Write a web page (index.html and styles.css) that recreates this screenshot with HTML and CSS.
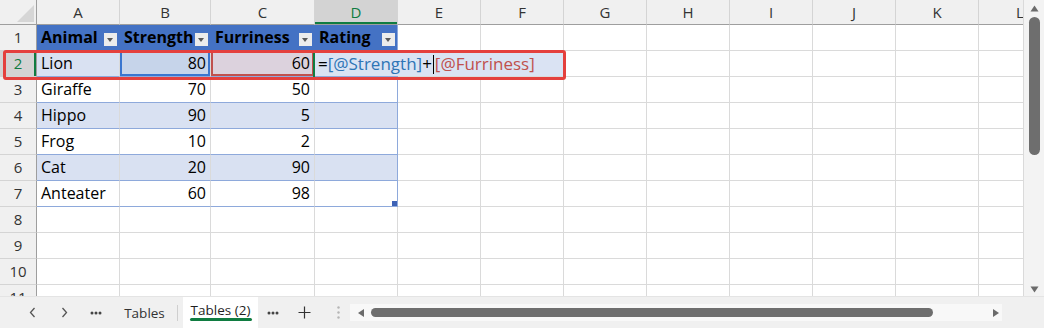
FILE: index.html
```html
<!DOCTYPE html>
<html lang="en">
  <head>
    <meta charset="UTF-8" />
    <title>Tables (2)</title>
    <link rel="stylesheet" href="styles.css">
  </head>
  <body>
    <div class="app">
      <div class="main">
        <div class="sheet">
          <!-- column headers -->
          <div class="corner"></div>
          <div class="col-head">A</div>
          <div class="col-head">B</div>
          <div class="col-head">C</div>
          <div class="col-head sel-col">D</div>
          <div class="col-head">E</div>
          <div class="col-head">F</div>
          <div class="col-head">G</div>
          <div class="col-head">H</div>
          <div class="col-head">I</div>
          <div class="col-head">J</div>
          <div class="col-head">K</div>
          <div class="col-head">L</div>

          <!-- row 1: table header -->
          <div class="row-head">1</div>
          <div class="cell head-cell">Animal<span class="filter"></span></div>
          <div class="cell head-cell">Strength<span class="filter"></span></div>
          <div class="cell head-cell">Furriness<span class="filter"></span></div>
          <div class="cell head-cell edge">Rating<span class="filter"></span></div>
          <div class="cell"></div><div class="cell"></div><div class="cell"></div><div class="cell"></div>
          <div class="cell"></div><div class="cell"></div><div class="cell"></div><div class="cell"></div>

          <!-- row 2: editing the formula -->
          <div class="row-head sel-row">2</div>
          <div class="cell tbl band">Lion</div>
          <div class="cell tbl band num ref-b">80</div>
          <div class="cell tbl band num ref-c">60</div>
          <div class="cell tbl band edge active">
            <div class="editor">=<span class="ref-s">[@Strength]</span>+<span class="caret"></span><span class="ref-f">[@Furriness]</span></div>
          </div>
          <div class="cell"></div><div class="cell"></div><div class="cell"></div><div class="cell"></div>
          <div class="cell"></div><div class="cell"></div><div class="cell"></div><div class="cell"></div>

          <div class="row-head">3</div>
          <div class="cell tbl">Giraffe</div>
          <div class="cell tbl num">70</div>
          <div class="cell tbl num">50</div>
          <div class="cell tbl edge"></div>
          <div class="cell"></div><div class="cell"></div><div class="cell"></div><div class="cell"></div>
          <div class="cell"></div><div class="cell"></div><div class="cell"></div><div class="cell"></div>

          <div class="row-head">4</div>
          <div class="cell tbl band">Hippo</div>
          <div class="cell tbl band num">90</div>
          <div class="cell tbl band num">5</div>
          <div class="cell tbl band edge"></div>
          <div class="cell"></div><div class="cell"></div><div class="cell"></div><div class="cell"></div>
          <div class="cell"></div><div class="cell"></div><div class="cell"></div><div class="cell"></div>

          <div class="row-head">5</div>
          <div class="cell tbl">Frog</div>
          <div class="cell tbl num">10</div>
          <div class="cell tbl num">2</div>
          <div class="cell tbl edge"></div>
          <div class="cell"></div><div class="cell"></div><div class="cell"></div><div class="cell"></div>
          <div class="cell"></div><div class="cell"></div><div class="cell"></div><div class="cell"></div>

          <div class="row-head">6</div>
          <div class="cell tbl band">Cat</div>
          <div class="cell tbl band num">20</div>
          <div class="cell tbl band num">90</div>
          <div class="cell tbl band edge"></div>
          <div class="cell"></div><div class="cell"></div><div class="cell"></div><div class="cell"></div>
          <div class="cell"></div><div class="cell"></div><div class="cell"></div><div class="cell"></div>

          <div class="row-head">7</div>
          <div class="cell tbl">Anteater</div>
          <div class="cell tbl num">60</div>
          <div class="cell tbl num">98</div>
          <div class="cell tbl edge corner-cell"><span class="handle"></span></div>
          <div class="cell"></div><div class="cell"></div><div class="cell"></div><div class="cell"></div>
          <div class="cell"></div><div class="cell"></div><div class="cell"></div><div class="cell"></div>

          <div class="row-head">8</div>
          <div class="cell"></div><div class="cell"></div><div class="cell"></div><div class="cell"></div>
          <div class="cell"></div><div class="cell"></div><div class="cell"></div><div class="cell"></div>
          <div class="cell"></div><div class="cell"></div><div class="cell"></div><div class="cell"></div>

          <div class="row-head">9</div>
          <div class="cell"></div><div class="cell"></div><div class="cell"></div><div class="cell"></div>
          <div class="cell"></div><div class="cell"></div><div class="cell"></div><div class="cell"></div>
          <div class="cell"></div><div class="cell"></div><div class="cell"></div><div class="cell"></div>

          <div class="row-head">10</div>
          <div class="cell"></div><div class="cell"></div><div class="cell"></div><div class="cell"></div>
          <div class="cell"></div><div class="cell"></div><div class="cell"></div><div class="cell"></div>
          <div class="cell"></div><div class="cell"></div><div class="cell"></div><div class="cell"></div>

          <div class="row-head">11</div>
          <div class="cell"></div><div class="cell"></div><div class="cell"></div><div class="cell"></div>
          <div class="cell"></div><div class="cell"></div><div class="cell"></div><div class="cell"></div>
          <div class="cell"></div><div class="cell"></div><div class="cell"></div><div class="cell"></div>

          <!-- red highlight drawn over row 2 -->
          <div class="callout"></div>
        </div>

        <div class="vscroll">
          <svg width="9" height="7" viewBox="0 0 9 7"><path d="M4.5 0.5 8.5 6.5 0.5 6.5Z" fill="#6b6b6b"/></svg>
          <div class="vthumb"></div>
          <svg class="down" width="9" height="7" viewBox="0 0 9 7"><path d="M0.5 0.5 8.5 0.5 4.5 6.5Z" fill="#6b6b6b"/></svg>
        </div>
      </div>

      <div class="tabbar">
        <div class="btn">
          <svg width="7" height="11" viewBox="0 0 7 11"><path d="M5.5 1 1.5 5.5 5.5 10" fill="none" stroke="#555" stroke-width="1.3"/></svg>
        </div>
        <div class="btn">
          <svg width="7" height="11" viewBox="0 0 7 11"><path d="M1.5 1 5.5 5.5 1.5 10" fill="none" stroke="#555" stroke-width="1.3"/></svg>
        </div>
        <div class="btn">
          <svg width="12" height="4" viewBox="0 0 12 4"><circle cx="2" cy="2" r="1.5" fill="#444"/><circle cx="6" cy="2" r="1.5" fill="#444"/><circle cx="10" cy="2" r="1.5" fill="#444"/></svg>
        </div>
        <div class="tab">Tables</div>
        <div class="tab-sep"></div>
        <div class="tab active-tab">Tables (2)</div>
        <div class="btn small">
          <svg width="12" height="4" viewBox="0 0 12 4"><circle cx="2" cy="2" r="1.5" fill="#444"/><circle cx="6" cy="2" r="1.5" fill="#444"/><circle cx="10" cy="2" r="1.5" fill="#444"/></svg>
        </div>
        <div class="btn">
          <svg width="13" height="13" viewBox="0 0 13 13"><path d="M6.5 0.5V12.5M0.5 6.5H12.5" stroke="#333" stroke-width="1.2"/></svg>
        </div>
        <div class="btn grip">
          <svg width="3" height="13" viewBox="0 0 3 13"><circle cx="1.5" cy="1.5" r="1.2" fill="#b5b5b5"/><circle cx="1.5" cy="6.5" r="1.2" fill="#b5b5b5"/><circle cx="1.5" cy="11.5" r="1.2" fill="#b5b5b5"/></svg>
        </div>
        <div class="hscroll">
          <svg width="6" height="8" viewBox="0 0 6 8"><path d="M6 0 6 8 0 4Z" fill="#6b6b6b"/></svg>
          <div class="hthumb"></div>
          <svg class="right" width="6" height="8" viewBox="0 0 6 8"><path d="M0 0 6 4 0 8Z" fill="#6b6b6b"/></svg>
        </div>
      </div>
    </div>
  </body>
</html>
```

FILE: styles.css
```css
* {
  box-sizing: border-box;
}
body {
  margin: 0;
  background: #fff;
  font-family: "Open Sans", "Liberation Sans", sans-serif;
}
.app {
  width: 1044px;
  height: 328px;
  display: flex;
  flex-direction: column;
  overflow: hidden;
}
.main {
  display: flex;
  height: 296px;
}
.sheet {
  position: relative;
  width: 1023px;
  height: 296px;
  overflow: hidden;
  display: grid;
  grid-template-columns: 37px 83px 91px 104px repeat(9, 83px);
  grid-template-rows: 25px repeat(11, 26px);
  align-content: start;
}

/* headers */
.corner {
  position: relative;
  background: #f0f0f0;
  border-right: 1px solid #9e9e9e;
  border-bottom: 1px solid #9e9e9e;
}
.corner::after {
  content: "";
  position: absolute;
  right: 2px;
  bottom: 2px;
  border-left: 17px solid transparent;
  border-bottom: 17px solid #d6d6d6;
}
.col-head {
  background: #f0f0f0;
  border-right: 1px solid #d4d4d4;
  border-bottom: 1px solid #9e9e9e;
  text-align: center;
  font-size: 15px;
  line-height: 24px;
  color: #333;
}
.row-head {
  background: #f0f0f0;
  border-right: 1px solid #9e9e9e;
  border-bottom: 1px solid #d4d4d4;
  text-align: center;
  font-size: 15px;
  line-height: 25px;
  color: #333;
}
.sel-col {
  background: #d3d3d3;
  color: #107c41;
  box-shadow: inset 0 -2px #107c41;
}
.sel-row {
  background: #d3d3d3;
  color: #107c41;
  box-shadow: inset -2px 0 #107c41;
}

/* cells */
.cell {
  border-right: 1px solid #dadada;
  border-bottom: 1px solid #dadada;
  padding: 0 4px;
  font-size: 16px;
  line-height: 25px;
  white-space: nowrap;
  overflow: hidden;
  color: #000;
}
.num {
  text-align: right;
}
.tbl {
  border-bottom-color: #8ea9db;
}
.edge {
  border-right-color: #8ea9db;
}
.band {
  background: #d9e1f2;
}
.head-cell {
  display: flex;
  justify-content: space-between;
  padding: 0 2px 0 4px;
  background: #4472c4;
  font-weight: 700;
  border-right-color: #4472c4;
  border-bottom-color: #8ea9db;
}
.head-cell.edge {
  border-right-color: #8ea9db;
}
.filter {
  position: relative;
  flex-shrink: 0;
  align-self: flex-end;
  width: 13px;
  height: 13px;
  margin-bottom: 4px;
  background: #ececec;
}
.filter::after {
  content: "";
  position: absolute;
  left: 3px;
  top: 5px;
  border-left: 3.5px solid transparent;
  border-right: 3.5px solid transparent;
  border-top: 4px solid #595959;
}

/* formula references */
.ref-b {
  background: #c6d4ea;
  box-shadow: inset 0 0 0 2px #3a76cf;
}
.ref-c {
  background: #dcd2dd;
  box-shadow: inset 0 0 0 2px #c0504d;
}
.active {
  position: relative;
  overflow: visible;
  padding: 0;
}
.active::after {
  content: "";
  position: absolute;
  left: -2px;
  top: -1px;
  width: 88px;
  height: 27px;
  border-left: 2px solid #107c41;
  border-bottom: 2px solid #107c41;
  z-index: 3;
}
.editor {
  position: absolute;
  left: 0;
  top: 0;
  width: 249px;
  height: 25px;
  padding-left: 3px;
  background: #dae3f3;
  font-size: 17px;
  white-space: nowrap;
  z-index: 2;
}
.ref-s {
  color: #2e75b6;
}
.ref-f {
  color: #c0504d;
}
.caret {
  display: inline-block;
  width: 1px;
  height: 19px;
  margin: 0 1px;
  background: #000;
  vertical-align: -4px;
}
.corner-cell {
  position: relative;
}
.handle {
  position: absolute;
  right: 0;
  bottom: 0;
  width: 5px;
  height: 5px;
  background: #3d62b6;
}
.callout {
  position: absolute;
  left: 3px;
  top: 50px;
  width: 563px;
  height: 30px;
  border: 3px solid #e4403d;
  border-radius: 3px;
  z-index: 5;
}

/* vertical scrollbar */
.vscroll {
  width: 21px;
  height: 296px;
  border-left: 1px solid #dadada;
  background: #f3f3f3;
  display: flex;
  flex-direction: column;
  align-items: center;
  padding: 5px 0 3px;
}
.vthumb {
  width: 11px;
  height: 138px;
  margin-top: 5px;
  border-radius: 6px;
  background: #6e6e6e;
}
.vscroll .down {
  margin-top: auto;
}

/* sheet tabs */
.tabbar {
  height: 32px;
  display: flex;
  align-items: center;
  padding-left: 16px;
  background: #f0f0f0;
  border-top: 1px solid #e4e4e4;
  font-size: 13.5px;
  color: #333;
}
.btn {
  width: 32px;
  height: 100%;
  display: flex;
  align-items: center;
  justify-content: center;
}
.btn.small {
  width: 30px;
}
.btn.grip {
  width: 24px;
  margin-left: 6px;
}
.tab {
  width: 65px;
  text-align: center;
}
.tab-sep {
  width: 1px;
  height: 16px;
  background: #cfcfcf;
}
.active-tab {
  width: 75px;
  height: 100%;
  margin-left: 5px;
  padding-top: 4px;
  background: #fff;
  color: #1f1f1f;
  position: relative;
}
.active-tab::after {
  content: "";
  position: absolute;
  left: 7px;
  right: 6px;
  bottom: 7px;
  height: 3px;
  border-radius: 2px;
  background: #107c41;
}
.hscroll {
  width: 652px;
  height: 17px;
  display: flex;
  align-items: center;
  padding: 0 3px 0 8px;
  background: #f8f8f8;
}
.hthumb {
  width: 562px;
  height: 9px;
  margin-left: 7px;
  border-radius: 5px;
  background: #6e6e6e;
}
.hscroll .right {
  margin-left: auto;
}
```
